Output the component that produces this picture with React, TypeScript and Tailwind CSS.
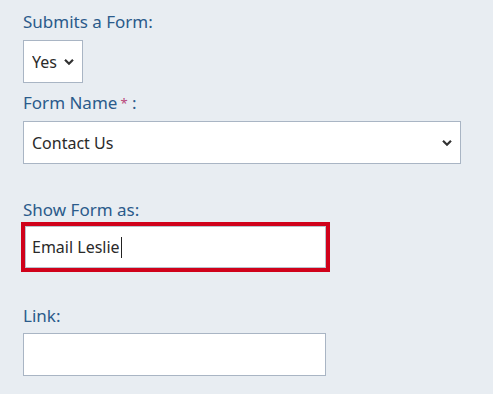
const font = { fontFamily: "'Noto Sans', 'Open Sans', sans-serif" };

function Chevron() {
  return (
    <svg viewBox="0 0 10 7" className="pointer-events-none absolute top-1/2 -translate-y-1/2 right-[9px] w-[10px] h-[7px]">
      <path d="M1 1.2 L5 5.2 L9 1.2" fill="none" stroke="#333" strokeWidth="2.2" />
    </svg>
  );
}

export default function App() {
  return (
    <div className="min-h-screen bg-[#e8edf2] pl-[23px] pt-[10px]" style={font}>
      {/* SUBMITS */}
      <label className="block text-[17px] leading-[24px] text-[#2b5b8b]">Submits a Form:</label>
      <div className="relative mt-[6px] w-[60px] h-[43px]">
        <select className="appearance-none w-full h-full bg-white border border-[#a9b5c4] pl-[8px] text-[16px] text-[#2a2a2a] outline-none">
          <option>Yes</option>
          <option>No</option>
        </select>
        <Chevron />
      </div>

      {/* FORM NAME */}
      <label className="block mt-[8px] text-[17px] leading-[24px] text-[#2b5b8b]">
        Form Name<span className="text-[#b8467a] text-[13px] align-top ml-[3px]">*</span> :
      </label>
      <div className="relative mt-[6px] w-[438px] h-[43px]">
        <select className="appearance-none w-full h-full bg-white border border-[#a9b5c4] pl-[8px] text-[16px] text-[#2a2a2a] outline-none">
          <option>Contact Us</option>
        </select>
        <Chevron />
      </div>

      {/* SHOW FORM AS */}
      <label className="block mt-[34px] text-[17px] leading-[24px] text-[#2b5b8b]">Show Form as:</label>
      <div className="mt-[4px] ml-[2px] w-[301px] h-[42px] bg-white border border-[#b9c3cf] outline-4 outline-[#d0021b] flex items-center pl-[6px] text-[16px] text-[#2a2a2a]">
        Email Leslie
        <span className="inline-block w-px h-[21px] bg-[#222] ml-[1px]" />
      </div>

      {/* LINK */}
      <label className="block mt-[36px] text-[17px] leading-[24px] text-[#2b5b8b]">Link:</label>
      <input className="block mt-[5px] w-[303px] h-[43px] bg-white border border-[#a9b5c4] px-[8px] text-[16px] outline-none" />
    </div>
  );
}
